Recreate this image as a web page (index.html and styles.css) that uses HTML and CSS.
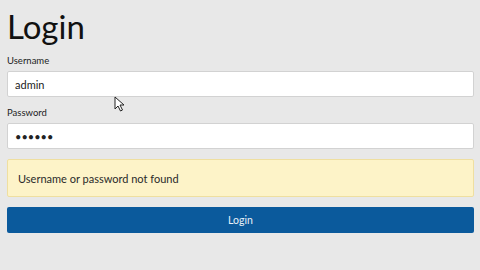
FILE: index.html
```html
<!DOCTYPE html>
<html lang="en">
<head>
  <meta charset="UTF-8" />
  <title>Login</title>
  <link rel="stylesheet" href="styles.css">
</head>
<body>
  <div class="page">
    <h1 class="title">Login</h1>
    <form class="login">
      <label class="field">
        <span class="label">Username</span>
        <input class="input" type="text" value="admin" />
      </label>
      <label class="field">
        <span class="label">Password</span>
        <input class="input" type="password" value="secret" />
      </label>
      <div class="alert">Username or password not found</div>
      <button class="btn" type="button">Login</button>
    </form>
  </div>
  <svg class="cursor" width="12" height="16" viewBox="0 0 12 16">
    <path d="M1 1 L1 13 L4 10 L6.5 15 L8.5 14 L6 9 L10 9 Z" fill="#fff" stroke="#222" stroke-width="1"/>
  </svg>
</body>
</html>
```

FILE: styles.css
```css
body {
  margin: 0;
  background: #e8e8e8;
  font-family: "Lato", "Open Sans", sans-serif;
  color: #222;
  overflow: hidden;
}

.page {
  padding: 8px 6px 0 7px;
}

.title {
  margin: 0 0 10px;
  font-size: 33px;
  font-weight: 400;
  line-height: 37px;
  color: #111;
}

.login {
  display: flex;
  flex-direction: column;
}

.field {
  display: flex;
  flex-direction: column;
  margin-bottom: 10px;
}

.label {
  font-size: 9.5px;
  line-height: 12px;
  margin-bottom: 4px;
  color: #222;
}

.input {
  box-sizing: border-box;
  height: 26px;
  border: 1px solid #d2d2d2;
  border-radius: 2px;
  background: #fff;
  padding: 0 7px;
  font-family: inherit;
  font-size: 11px;
  color: #222;
}

.alert {
  box-sizing: border-box;
  height: 38px;
  display: flex;
  align-items: center;
  padding: 0 10px;
  background: #fdf3c8;
  border: 1px solid #efdfa0;
  border-radius: 2px;
  font-size: 11px;
  color: #2a2a2a;
  margin-bottom: 10px;
}

.btn {
  height: 26px;
  border: none;
  border-radius: 2px;
  background: #0b5a9c;
  color: #e8f0f8;
  font-family: inherit;
  font-size: 10.5px;
}

.cursor {
  position: absolute;
  left: 114px;
  top: 96px;
}
```
